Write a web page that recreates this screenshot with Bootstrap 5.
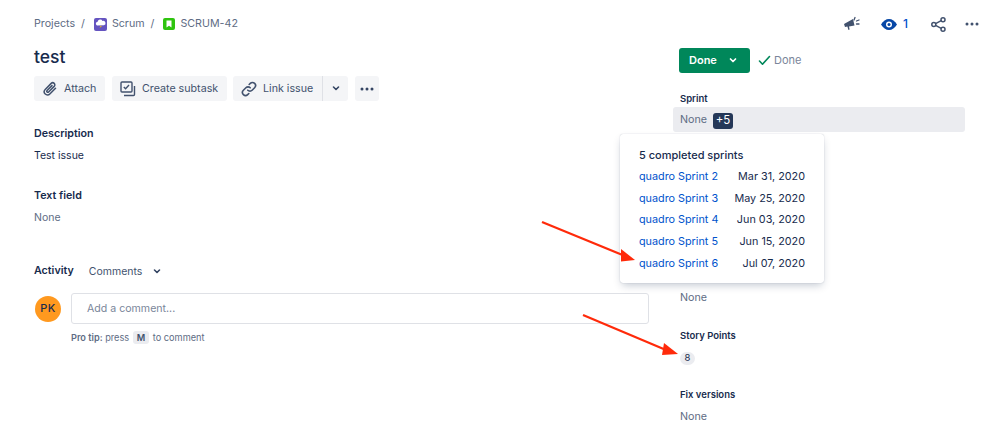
<!DOCTYPE html>
<html lang="en">
<head>
<meta charset="utf-8">
<title>SCRUM-42</title>
<link href="https://cdn.jsdelivr.net/npm/bootstrap@5.3.0/dist/css/bootstrap.min.css" rel="stylesheet">
<style>
html,body{height:444px;overflow:hidden;background:#fff}
body{font-family:Inter,"Liberation Sans",sans-serif;font-size:11px;color:#172b4d}
.stage{position:relative;width:999px;height:444px;overflow:hidden}
.shell{padding-left:34px;padding-right:34px}
.maincol{width:615px;flex:none}
.sidecol{margin-left:24px;width:292px;flex:none;padding-top:48px}
.crumbs{height:16px;margin-top:16px;color:#5e6c84;font-size:10.700px}
.crumbs .sep{margin:0 9px 0 6px}
.crumbs svg{margin-right:5px}
.ttl{font-size:17.500px;font-weight:500;line-height:24px;margin:13px 0 7px;color:#172b4d}
.tbtn{height:25px;background:#f4f5f7;border-radius:3px;color:#42526e;font-size:10.700px;padding:0 0 0 8px;border:0;gap:6px}
.tbtn svg{flex:none}
.tbtn span{padding-top:1px}
.w-attach{width:71px}
.w-sub{width:115px;margin-left:7px}
.w-link{width:90px;margin-left:6px}
.w-more{width:25px;padding:0}
.w-dots{width:24px;margin-left:7px;padding:0}
.tjoin{width:1px;height:25px;background:#dfe1e6;margin-left:-1px}
.hd{font-size:10.700px;font-weight:600;line-height:16px;color:#172b4d}
.tx{font-size:10.500px;line-height:16px;color:#172b4d}
.muted{color:#5e6c84}
.cmtmode{margin-left:15px;padding-top:2px;color:#42526e}
.avatar{width:26px;height:26px;border-radius:50%;background:#ff991f;color:#172b4d;font-size:11px;font-weight:500;letter-spacing:.03em;margin-left:1px}
.cmt{width:578px;height:31px;border:1px solid #dfe1e6;border-radius:3px;padding-left:15px;color:#7a869a;font-size:10.600px;margin-left:10px}
.tip{font-size:9.200px;color:#5e6c84;line-height:14px;margin:7px 0 0 37px}
.kbd{background:#ebecf0;border-radius:3px;padding:1px 4px;color:#42526e;font-weight:600;margin:0 1px}
.actions{position:absolute;top:15px;right:19px}
.done{width:71px;height:25px;background:#00875a;border-radius:3px;color:#fff;font-size:11px;font-weight:600;padding-left:10px}
.statusok{color:#7a869a;font-size:11px}
.lbl{font-size:9.500px;font-weight:600;line-height:14px;color:#172b4d;margin-left:7px}
.sprintrow{height:25px;background:#ebecf0;border-radius:3px;padding:2px 0 0 7px;margin-top:1px;color:#5e6c84;font-size:10.700px}
.plus{background:#253858;color:#fff;border-radius:3px;width:20px;height:16px;font-size:11.500px;margin-left:6px}
.pill{width:15px;height:13px;background:#ebecf0;border-radius:7px;font-size:9.500px;margin-left:7px;color:#172b4d}
.val{margin-left:7px;line-height:16px;font-size:10.700px;color:#5e6c84}
.pop{position:absolute;left:620px;top:134px;width:204px;height:149px;background:#fff;border-radius:3px;box-shadow:0 4px 8px -2px rgba(9,30,66,.25),0 0 1px rgba(9,30,66,.31);padding:13px 19px}
.pophd{font-size:11px;font-weight:500;line-height:16px;color:#172b4d;margin-bottom:3px}
.poprow{height:21.750px;font-size:10.800px;color:#172b4d}
.poprow a{color:#0052cc;text-decoration:none}
.arrows{position:absolute;left:0;top:0;pointer-events:none}
</style>
</head>
<body>
<div class="stage">
<div class="shell d-flex">
  <div class="maincol">
    <div class="crumbs d-flex align-items-center">
      <span>Projects</span><span class="sep">/</span>
      <svg width="13" height="13" viewBox="0 0 13 13"><rect width="13" height="13" rx="2" fill="#6554c0"/><path d="M3 7.500a2 2 0 0 1 .6-3.800A2.600 2.600 0 0 1 8.500 3a2.200 2.200 0 0 1 1.500 4.300z" fill="#fff"/><path d="M6.800 7.500 5.500 10l2.300-1.800z" fill="#ffc400"/></svg>
      <span>Scrum</span><span class="sep">/</span>
      <svg width="12" height="12" viewBox="0 0 12 12"><rect width="12" height="12" rx="2" fill="#2fc40f"/><path d="M3.500 2.500h5v7L6 7.800 3.500 9.500z" fill="#fff"/></svg>
      <span>SCRUM-42</span>
    </div>
    <h1 class="ttl">test</h1>
    <div class="d-flex align-items-center">
      <div class="tbtn w-attach d-flex align-items-center">
        <svg width="16" height="16" viewBox="0 0 16 16" fill="none" stroke="#42526e" stroke-width="1.500" stroke-linecap="round"><path d="M13.500 7.200 7.800 13a3.200 3.200 0 0 1-4.600-4.500l6-6.100a2.100 2.100 0 0 1 3 3L6.600 11a1 1 0 0 1-1.500-1.500L10 4.600"/></svg>
        <span>Attach</span>
      </div>
      <div class="tbtn w-sub d-flex align-items-center">
        <svg width="16" height="16" viewBox="0 0 16 16" fill="none" stroke="#42526e" stroke-width="1.400"><rect x="1" y="1" width="11" height="10" rx="1"/><path d="m3.800 6 1.800 1.800L9 4"/><path d="M14.500 5v8.500a1 1 0 0 1-1 1H4"/></svg>
        <span>Create subtask</span>
      </div>
      <div class="tbtn w-link d-flex align-items-center rounded-end-0">
        <svg width="16" height="16" viewBox="0 0 16 16" fill="none" stroke="#42526e" stroke-width="1.600" stroke-linecap="round"><path d="M6.800 9.200a3 3 0 0 0 4.300 0l2.500-2.500a3 3 0 0 0-4.300-4.300L8.200 3.500"/><path d="M9.200 6.800a3 3 0 0 0-4.300 0L2.400 9.300a3 3 0 0 0 4.300 4.300l1.100-1.100"/></svg>
        <span>Link issue</span>
      </div>
      <div class="tjoin"></div>
      <div class="tbtn w-more d-flex align-items-center justify-content-center rounded-start-0">
        <svg width="10" height="7" viewBox="0 0 10 7" fill="none" stroke="#344563" stroke-width="1.600" stroke-linecap="round" stroke-linejoin="round"><path d="m2.500 2 2.500 2.500L7.500 2"/></svg>
      </div>
      <div class="tbtn w-dots d-flex align-items-center justify-content-center">
        <svg width="16" height="4" viewBox="0 0 16 4" fill="#344563"><circle cx="3" cy="2" r="1.500"/><circle cx="8" cy="2" r="1.500"/><circle cx="13" cy="2" r="1.500"/></svg>
      </div>
    </div>
    <div class="hd" style="margin-top:25px">Description</div>
    <div class="tx" style="margin-top:6px">Test issue</div>
    <div class="hd" style="margin-top:24px">Text field</div>
    <div class="tx muted" style="margin-top:6px">None</div>
    <div class="d-flex align-items-center" style="margin-top:37px;height:16px">
      <div class="hd">Activity</div>
      <div class="tx cmtmode">Comments</div>
      <svg width="10" height="7" viewBox="0 0 10 7" fill="none" stroke="#344563" stroke-width="1.600" stroke-linecap="round" stroke-linejoin="round" style="margin-left:10px"><path d="m2.500 2 2.500 2.500L7.500 2"/></svg>
    </div>
    <div class="d-flex align-items-center" style="margin-top:14px">
      <div class="avatar d-flex align-items-center justify-content-center">PK</div>
      <div class="cmt d-flex align-items-center">Add a comment...</div>
    </div>
    <div class="tip"><b class="fw-semibold">Pro tip:</b> press <span class="kbd">M</span> to comment</div>
  </div>
  <div class="sidecol">
    <div class="d-flex align-items-center" style="margin-left:6px">
      <div class="done d-flex align-items-center">Done
        <svg width="10" height="7" viewBox="0 0 10 7" fill="none" stroke="#fff" stroke-width="1.700" stroke-linecap="round" stroke-linejoin="round" style="margin-left:11px"><path d="m2.500 2 2.500 2.500L7.500 2"/></svg>
      </div>
      <svg width="13" height="11" viewBox="0 0 13 11" fill="none" stroke="#00875a" stroke-width="1.600" stroke-linecap="round" stroke-linejoin="round" style="margin-left:8px"><path d="m1.500 6 3 3.200L11.500 1.500"/></svg>
      <span class="statusok" style="margin-left:3px">Done</span>
    </div>
    <div class="lbl" style="margin-top:19px">Sprint</div>
    <div class="sprintrow d-flex align-items-center">None<span class="plus d-flex align-items-center justify-content-center">+5</span></div>
    <div class="val" style="margin-top:158px">None</div>
    <div class="lbl" style="margin-top:23px">Story Points</div>
    <div class="pill d-flex align-items-center justify-content-center" style="margin-top:9px">8</div>
    <div class="lbl" style="margin-top:23px">Fix versions</div>
    <div class="val" style="margin-top:7px">None</div>
  </div>
</div>
<div class="actions d-flex align-items-center">
  <svg width="17" height="16" viewBox="0 0 17 16" fill="#42526e"><path d="M1 8 10 3l1.500 6.500L6 10.500l.6 3-1.200.4-1-3.300L2 11z"/><path d="M12 1.500 11 4M13.500 5l2.500-1M13.500 8h2.500" stroke="#42526e" stroke-width="1.300" fill="none" stroke-linecap="round"/></svg>
  <svg width="16" height="11" viewBox="0 0 16 11" style="margin-left:21px"><path d="M0 5.500C2 2 5 0 8 0s6 2 8 5.500C14 9 11 11 8 11S2 9 0 5.500z" fill="#0747a6"/><circle cx="8" cy="5.500" r="3" fill="#fff"/><circle cx="8" cy="5.500" r="1.500" fill="#0747a6"/></svg>
  <span style="margin-left:6px;color:#0052cc;font-weight:500;font-size:12px">1</span>
  <svg width="15" height="15" viewBox="0 0 15 15" fill="none" stroke="#42526e" stroke-width="1.500" style="margin-left:23px"><circle cx="2.800" cy="7.500" r="2"/><circle cx="12" cy="2.800" r="2"/><circle cx="12" cy="12.200" r="2"/><path d="M4.600 6.600 10.200 3.700M4.600 8.400l5.600 2.900"/></svg>
  <svg width="16" height="4" viewBox="0 0 16 4" fill="#42526e" style="margin-left:18px"><circle cx="3" cy="2" r="1.500"/><circle cx="8" cy="2" r="1.500"/><circle cx="13" cy="2" r="1.500"/></svg>
</div>
<div class="pop">
  <div class="pophd">5 completed sprints</div>
  <div class="poprow d-flex justify-content-between align-items-center"><a href="#">quadro Sprint 2</a><span>Mar 31, 2020</span></div>
  <div class="poprow d-flex justify-content-between align-items-center"><a href="#">quadro Sprint 3</a><span>May 25, 2020</span></div>
  <div class="poprow d-flex justify-content-between align-items-center"><a href="#">quadro Sprint 4</a><span>Jun 03, 2020</span></div>
  <div class="poprow d-flex justify-content-between align-items-center"><a href="#">quadro Sprint 5</a><span>Jun 15, 2020</span></div>
  <div class="poprow d-flex justify-content-between align-items-center"><a href="#">quadro Sprint 6</a><span>Jul 07, 2020</span></div>
</div>
<svg class="arrows" width="999" height="444" viewBox="0 0 999 444">
  <path d="M542 222 L625 256" stroke="#ff2a0a" stroke-width="2.200"/>
  <path d="M621 249 L635 260 L621 261.500z" fill="#ff2a0a"/>
  <path d="M583 315 L666 350" stroke="#ff2a0a" stroke-width="2.200"/>
  <path d="M664 343 L678 354 L662 355z" fill="#ff2a0a"/>
</svg>
</div>
<script src="https://cdn.jsdelivr.net/npm/bootstrap@5.3.0/dist/js/bootstrap.bundle.min.js"></script>
</body>
</html>
